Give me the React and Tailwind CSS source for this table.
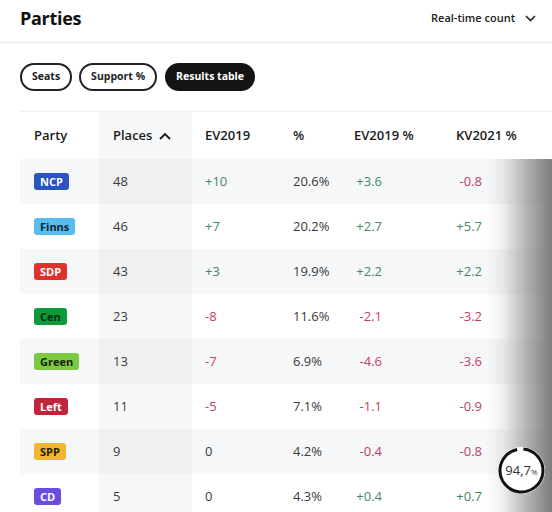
import React from "react";

const rows = [
  { p: "NCP", bg: "bg-[#2a55bd]", fg: "text-white", places: "48", ev: "+10", pct: "20.6%", evp: "+3.6", kv: "-0.8" },
  { p: "Finns", bg: "bg-[#56bdec]", fg: "text-[#10253a]", places: "46", ev: "+7", pct: "20.2%", evp: "+2.7", kv: "+5.7" },
  { p: "SDP", bg: "bg-[#e0322d]", fg: "text-white", places: "43", ev: "+3", pct: "19.9%", evp: "+2.2", kv: "+2.2" },
  { p: "Cen", bg: "bg-[#0d9a3b]", fg: "text-[#0b2a14]", places: "23", ev: "-8", pct: "11.6%", evp: "-2.1", kv: "-3.2" },
  { p: "Green", bg: "bg-[#7cc942]", fg: "text-[#14240c]", places: "13", ev: "-7", pct: "6.9%", evp: "-4.6", kv: "-3.6" },
  { p: "Left", bg: "bg-[#c1253b]", fg: "text-white", places: "11", ev: "-5", pct: "7.1%", evp: "-1.1", kv: "-0.9" },
  { p: "SPP", bg: "bg-[#f1b52f]", fg: "text-[#2a1f00]", places: "9", ev: "0", pct: "4.2%", evp: "-0.4", kv: "-0.8" },
  { p: "CD", bg: "bg-[#6b4be0]", fg: "text-white", places: "5", ev: "0", pct: "4.3%", evp: "+0.4", kv: "+0.7" },
];

function tone(v) {
  if (v.startsWith("+")) return "text-[#3f8a64]";
  if (v.startsWith("-")) return "text-[#c23d66]";
  return "text-[#3a3a3a]";
}

export default function App() {
  return (
    <div className="w-[552px] h-[512px] overflow-hidden bg-white relative" style={{ fontFamily: '"Open Sans", "Noto Sans", sans-serif' }}>
      {/* header */}
      <div className="h-[43px] border-b border-[#ececec] flex items-center justify-between pl-5 pr-[16px] pb-[6px]">
        <div className="text-[18px] font-bold text-[#111] tracking-[-0.3px]">Parties</div>
        <div className="flex items-center gap-[10px]">
          <span className="text-[11px] font-semibold text-[#222]">Real-time count</span>
          <svg width="11" height="7" viewBox="0 0 11 7" fill="none">
            <path d="M1 1l4.5 4.5L10 1" stroke="#222" strokeWidth="1.6" />
          </svg>
        </div>
      </div>

      {/* toggles */}
      <div className="flex gap-[7px] pl-5 pt-[20px] pb-[20px]">
        <div className="h-[28px] px-[10px] rounded-full border-2 border-[#222] flex items-center text-[10.5px] font-bold text-[#222]">Seats</div>
        <div className="h-[28px] px-[10px] rounded-full border-2 border-[#222] flex items-center text-[10.5px] font-bold text-[#222]">Support %</div>
        <div className="h-[28px] px-[11px] ml-[1px] rounded-full bg-[#141414] flex items-center text-[10.5px] font-bold text-white">Results table</div>
      </div>

      {/* table */}
      <div className="ml-5 border-t border-[#eeeeee] relative">
        <div className="flex h-[47px] items-center text-[13px] font-semibold text-[#1a1a1a]">
          <div className="w-[79px] shrink-0 pl-[14px] h-full flex items-center">Party</div>
          <div className="w-[93px] shrink-0 pl-[14px] h-full flex items-center bg-[#f6f7f9] gap-[7px]">
            Places
            <svg width="12" height="8" viewBox="0 0 12 8" fill="none">
              <path d="M1 7l5-5 5 5" stroke="#1a1a1a" strokeWidth="1.8" />
            </svg>
          </div>
          <div className="w-[87px] shrink-0 pl-[13px] h-full flex items-center">EV2019</div>
          <div className="w-[62px] shrink-0 pl-[14px] h-full flex items-center">%</div>
          <div className="w-[101px] shrink-0 pl-[13px] h-full flex items-center">EV2019 %</div>
          <div className="w-[120px] shrink-0 pl-[14px] h-full flex items-center">KV2021 %</div>
        </div>
        {rows.map((r, i) => {
          const shaded = i % 2 === 0;
          return (
            <div key={r.p} className={`flex h-[45px] items-center text-[13px] text-[#3a3a3a] ${shaded ? "bg-[#f6f7f9]" : "bg-white"}`}>
              <div className="w-[79px] shrink-0 pl-[14px] h-full flex items-center">
                <span className={`${r.bg} ${r.fg} text-[11px] font-bold leading-none px-[6px] h-[17px] flex items-center rounded-[3px]`}>{r.p}</span>
              </div>
              <div className={`w-[93px] shrink-0 pl-[14px] h-full flex items-center ${shaded ? "bg-[#eff0f2]" : "bg-[#f6f7f9]"}`}>{r.places}</div>
              <div className={`w-[87px] shrink-0 pl-[13px] h-full flex items-center ${tone(r.ev)}`}>{r.ev}</div>
              <div className="w-[62px] shrink-0 pl-[14px] h-full flex items-center">{r.pct}</div>
              <div className={`w-[101px] shrink-0 pl-[13px] h-full flex items-center ${tone(r.evp)}`}>
                <span className="w-[28px] text-right inline-block">{r.evp}</span>
              </div>
              <div className={`w-[120px] shrink-0 pl-[14px] h-full flex items-center ${tone(r.kv)}`}>
                <span className="w-[26px] text-right inline-block">{r.kv}</span>
              </div>
            </div>
          );
        })}
        {/* right fade */}
        <div className="absolute right-0 top-[47px] bottom-0 w-[66px] bg-[linear-gradient(to_right,rgba(255,255,255,0)_0%,rgba(150,150,150,0.15)_25%,rgba(110,110,110,0.55)_65%,rgba(110,110,110,0.9)_100%)]" />
      </div>

      {/* progress badge */}
      <div className="absolute left-[498px] top-[447px] w-[47px] h-[47px] rounded-full bg-white flex items-center justify-center">
        <svg className="absolute inset-0" width="47" height="47" viewBox="0 0 47 47">
          <circle cx="23.5" cy="23.5" r="21.5" fill="none" stroke="#111" strokeWidth="3"
            strokeDasharray={`${2 * Math.PI * 21.5 * 0.947} ${2 * Math.PI * 21.5}`}
            transform="rotate(-85 23.5 23.5)" />
        </svg>
        <span className="relative text-[13px] text-[#333] leading-none">94,7<span className="text-[8px]">%</span></span>
      </div>
    </div>
  );
}
